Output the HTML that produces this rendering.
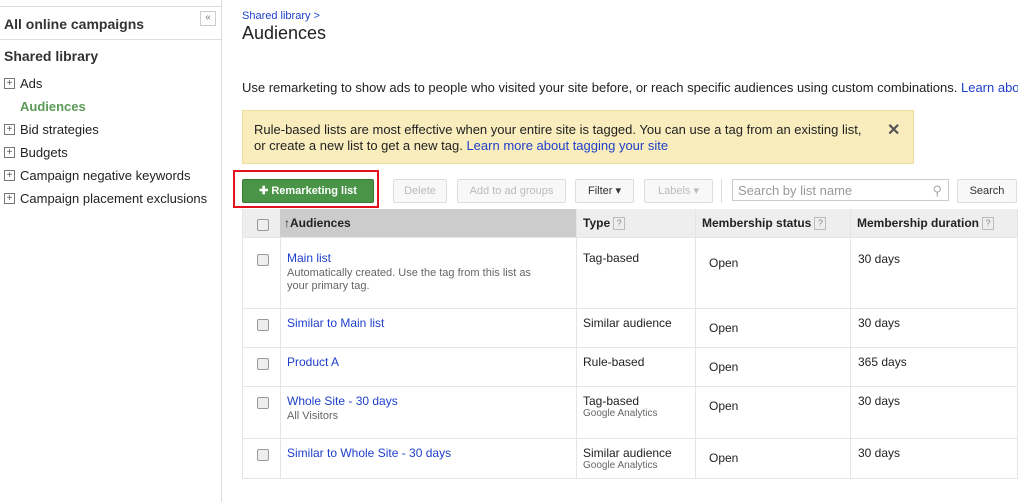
<!DOCTYPE html><html><head><style>
body{margin:0;width:1018px;height:502px;overflow:hidden;background:#fff;font-family:"Liberation Sans",Arial,sans-serif;font-size:13px;color:#222;position:relative}
.a{position:absolute}
.side{left:0;top:0;width:221px;height:502px;border-right:1px solid #ddd}
.pl{display:inline-block;width:9px;height:9px;border:1px solid #777;position:absolute;left:4px;font-size:10px;line-height:9px;text-align:center;color:#555}
.si{position:absolute;left:20px;font-size:13px;color:#222}
.btn{position:absolute;top:179px;height:22px;border:1px solid #ddd;border-radius:2px;background:#f8f8f8;font-size:11px;line-height:22px;text-align:center;color:#bbb}
.cb{position:absolute;left:257px;width:10px;height:10px;border:1px solid #999;border-radius:2px;background:#eee}
.lnk{color:#1e3fcc;position:absolute;left:287px;font-size:12px}
.sm{color:#666;font-size:11px;position:absolute}
.t{position:absolute;font-size:12px;color:#222}
.hl{position:absolute;left:242px;width:776px;height:1px;background:#e5e5e5}
.vl{position:absolute;width:1px;background:#e5e5e5;top:209px;height:269px}
.q{display:inline-block;width:10px;height:11px;border:1px solid #bbb;font-size:9px;line-height:11px;text-align:center;color:#888;font-weight:normal;vertical-align:1px;margin-left:3px}
</style></head><body>
<div class="a side"></div>
<div class="a" style="left:0;top:6px;width:221px;height:1px;background:#ddd"></div>
<div class="a" style="left:4px;top:16px;font-weight:bold;font-size:14px;color:#333">All online campaigns</div>
<div class="a" style="left:200px;top:11px;width:14px;height:13px;border:1px solid #ccc;font-size:10px;color:#777;text-align:center;line-height:12px">«</div>
<div class="a" style="left:0;top:39px;width:221px;height:1px;background:#ddd"></div>
<div class="a" style="left:4px;top:48px;font-weight:bold;font-size:14px;color:#333">Shared library</div>
<span class="pl" style="top:78px">+</span><div class="si" style="top:76px">Ads</div>
<div class="si" style="top:99px;color:#5b9a58;font-weight:bold">Audiences</div>
<span class="pl" style="top:124px">+</span><div class="si" style="top:122px">Bid strategies</div>
<span class="pl" style="top:147px">+</span><div class="si" style="top:145px">Budgets</div>
<span class="pl" style="top:170px">+</span><div class="si" style="top:168px">Campaign negative keywords</div>
<span class="pl" style="top:193px">+</span><div class="si" style="top:191px">Campaign placement exclusions</div>

<div class="a" style="left:242px;top:10px;font-size:11px;color:#1e3fcc">Shared library &gt;</div>
<div class="a" style="left:242px;top:23px;font-size:18px;color:#222">Audiences</div>
<div class="a" style="left:242px;top:80px;white-space:nowrap">Use remarketing to show ads to people who visited your site before, or reach specific audiences using custom combinations. <span style="color:#1e3fcc">Learn abo</span></div>
<div class="a" style="left:242px;top:110px;width:670px;height:52px;background:#f9edbe;border:1px solid #f0dc9c"></div>
<div class="a" style="left:254px;top:122px;font-size:13px;line-height:16px;white-space:nowrap">Rule-based lists are most effective when your entire site is tagged. You can use a tag from an existing list,<br>or create a new list to get a new tag. <span style="color:#1e3fcc">Learn more about tagging your site</span></div>
<div class="a" style="left:887px;top:120px;font-size:16px;font-weight:bold;color:#555">✕</div>

<div class="a" style="left:233px;top:170px;width:146px;height:38px;border:2px solid #e3121d;box-sizing:border-box"></div>
<div class="a" style="left:242px;top:179px;width:130px;height:22px;background:#4a9447;border:1px solid #3a7a38;border-radius:2px;color:#fff;font-weight:bold;font-size:11px;line-height:22px;text-align:center">✚ Remarketing list</div>
<div class="btn" style="left:393px;width:52px">Delete</div>
<div class="btn" style="left:457px;width:107px">Add to ad groups</div>
<div class="btn" style="left:575px;width:57px;color:#333">Filter ▾</div>
<div class="btn" style="left:644px;width:67px">Labels ▾</div>
<div class="a" style="left:721px;top:179px;width:1px;height:24px;background:#ddd"></div>
<div class="a" style="left:732px;top:179px;height:22px;border:1px solid #ccc;font-size:13px;line-height:22px;color:#999;padding-left:5px;box-sizing:border-box;width:217px">Search by list name<span style="position:absolute;right:6px;color:#aaa">⚲</span></div>
<div class="btn" style="left:957px;width:58px;color:#333">Search</div>

<div class="a" style="left:242px;top:209px;width:776px;height:28px;background:#eee"></div>
<div class="a" style="left:280px;top:209px;width:296px;height:28px;background:#ccc"></div>
<div class="cb" style="top:219px"></div>
<div class="t" style="left:284px;top:216px;font-weight:bold">↑Audiences</div>
<div class="t" style="left:583px;top:216px;font-weight:bold">Type<span class="q">?</span></div>
<div class="t" style="left:702px;top:216px;font-weight:bold">Membership status<span class="q">?</span></div>
<div class="t" style="left:857px;top:216px;font-weight:bold">Membership duration<span class="q">?</span></div>
<div class="vl" style="left:242px"></div><div class="vl" style="left:280px;top:237px;height:241px"></div><div class="vl" style="left:576px"></div><div class="vl" style="left:695px"></div><div class="vl" style="left:850px"></div><div class="vl" style="left:1017px"></div>
<div class="hl" style="top:237px"></div><div class="hl" style="top:308px"></div><div class="hl" style="top:347px"></div><div class="hl" style="top:386px"></div><div class="hl" style="top:438px"></div><div class="hl" style="top:478px"></div>

<div class="cb" style="top:254px"></div>
<div class="lnk" style="top:251px">Main list</div>
<div class="sm" style="left:287px;top:267px;line-height:13px">Automatically created. Use the tag from this list as<br>your primary tag.</div>
<div class="t" style="left:583px;top:251px">Tag-based</div><div class="t" style="left:709px;top:256px">Open</div><div class="t" style="left:858px;top:252px">30 days</div>

<div class="cb" style="top:319px"></div>
<div class="lnk" style="top:316px">Similar to Main list</div>
<div class="t" style="left:583px;top:316px">Similar audience</div><div class="t" style="left:709px;top:321px">Open</div><div class="t" style="left:858px;top:316px">30 days</div>

<div class="cb" style="top:358px"></div>
<div class="lnk" style="top:355px">Product A</div>
<div class="t" style="left:583px;top:355px">Rule-based</div><div class="t" style="left:709px;top:360px">Open</div><div class="t" style="left:858px;top:355px">365 days</div>

<div class="cb" style="top:397px"></div>
<div class="lnk" style="top:394px">Whole Site - 30 days</div>
<div class="sm" style="left:287px;top:410px">All Visitors</div>
<div class="t" style="left:583px;top:394px">Tag-based</div><div class="sm" style="left:583px;top:408px;font-size:10px">Google Analytics</div>
<div class="t" style="left:709px;top:399px">Open</div><div class="t" style="left:858px;top:394px">30 days</div>

<div class="cb" style="top:449px"></div>
<div class="lnk" style="top:446px">Similar to Whole Site - 30 days</div>
<div class="t" style="left:583px;top:446px">Similar audience</div><div class="sm" style="left:583px;top:460px;font-size:10px">Google Analytics</div>
<div class="t" style="left:709px;top:451px">Open</div><div class="t" style="left:858px;top:446px">30 days</div>
</body></html>
